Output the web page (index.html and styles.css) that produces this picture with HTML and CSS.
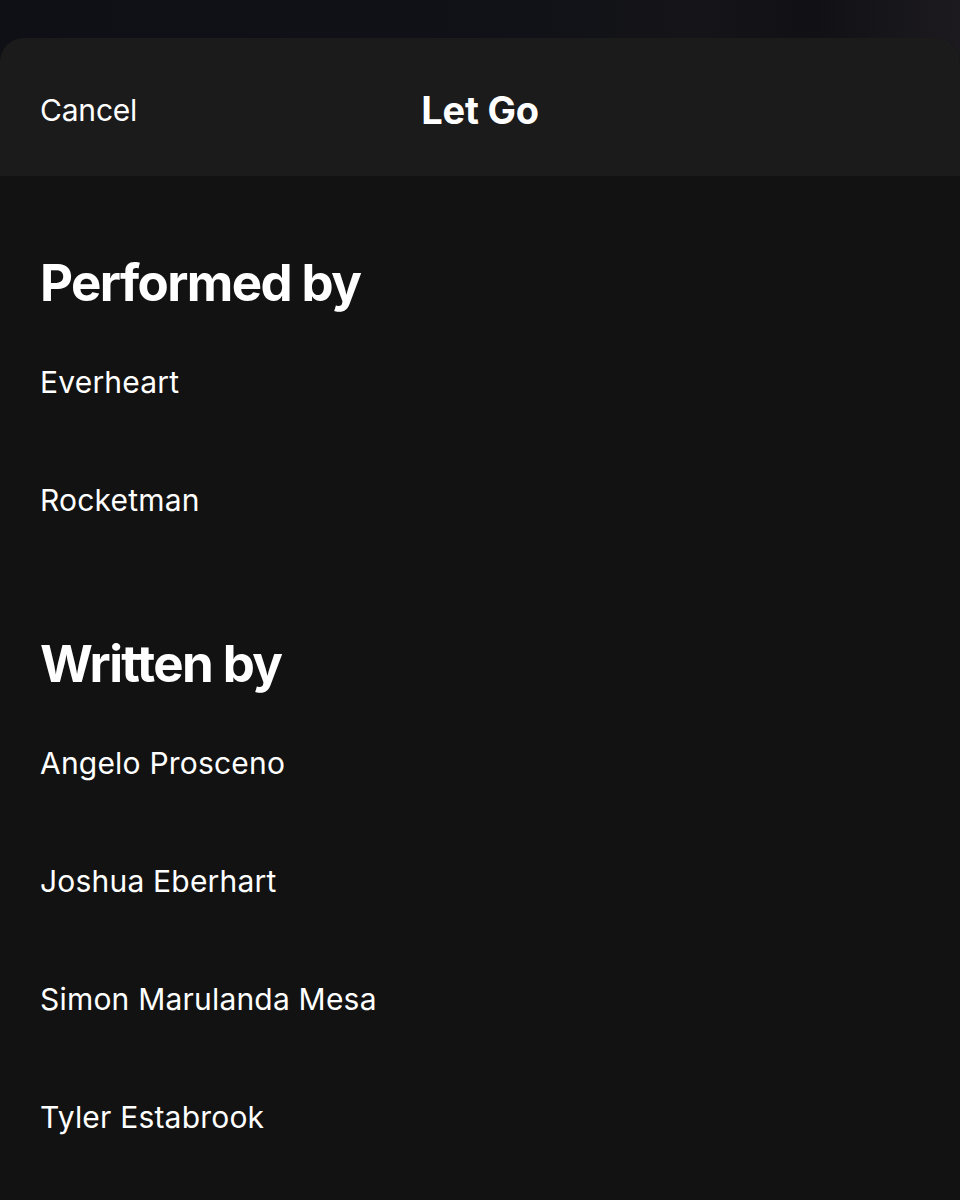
FILE: index.html
```html
<!DOCTYPE html>
<html lang="en">
<head>
<meta charset="utf-8">
<title>Let Go - Credits</title>
<link rel="stylesheet" href="styles.css">
</head>
<body>
<div class="backdrop"></div>
<div class="sheet">
  <header class="sheet-header">
    <span class="cancel">Cancel</span>
    <h1 class="title">Let Go</h1>
  </header>
  <main class="credits">
    <section class="group">
      <h2 class="group-title">Performed by</h2>
      <ul class="names">
        <li class="name">Everheart</li>
        <li class="name">Rocketman</li>
      </ul>
    </section>
    <section class="group">
      <h2 class="group-title">Written by</h2>
      <ul class="names">
        <li class="name">Angelo Prosceno</li>
        <li class="name">Joshua Eberhart</li>
        <li class="name">Simon Marulanda Mesa</li>
        <li class="name">Tyler Estabrook</li>
      </ul>
    </section>
  </main>
</div>
</body>
</html>
```
FILE: styles.css
```css
* { box-sizing: border-box; }
html, body {
  margin: 0;
  padding: 0;
  height: 100%;
}
body {
  background: linear-gradient(90deg, #0e1015 0%, #101217 55%, #151418 72%, #111115 85%, #1c1a1f 100%);
  font-family: Inter, "Noto Sans", sans-serif;
  color: #ffffff;
  overflow: hidden;
  display: flex;
  flex-direction: column;
}
.backdrop {
  height: 38px;
  flex: none;
}
.sheet {
  flex: 1;
  background: #121212;
  border-radius: 24px 24px 0 0;
  overflow: hidden;
}
.sheet-header {
  height: 138px;
  padding-top: 6px;
  background: #1b1b1b;
  display: flex;
  align-items: center;
  justify-content: center;
  position: relative;
}
.cancel {
  position: absolute;
  left: 40px;
  top: 50%;
  transform: translateY(-50%);
  margin-top: 3px;
  font-size: 30px;
  font-weight: 400;
  letter-spacing: -0.2px;
}
.title {
  margin: 0;
  font-size: 38px;
  font-weight: 700;
  letter-spacing: -0.2px;
}
.credits {
  padding: 0 40px;
}
.group {
  padding-top: 77px;
}
.group + .group {
  padding-top: 75px;
}
.group-title {
  margin: 0 0 10px;
  height: 60px;
  line-height: 60px;
  font-size: 51px;
  font-weight: 700;
  letter-spacing: -1.6px;
}
.names {
  list-style: none;
  margin: 0;
  padding: 0;
}
.name {
  height: 118px;
  display: flex;
  align-items: center;
  font-size: 30px;
  font-weight: 400;
  letter-spacing: 0.2px;
}
```
